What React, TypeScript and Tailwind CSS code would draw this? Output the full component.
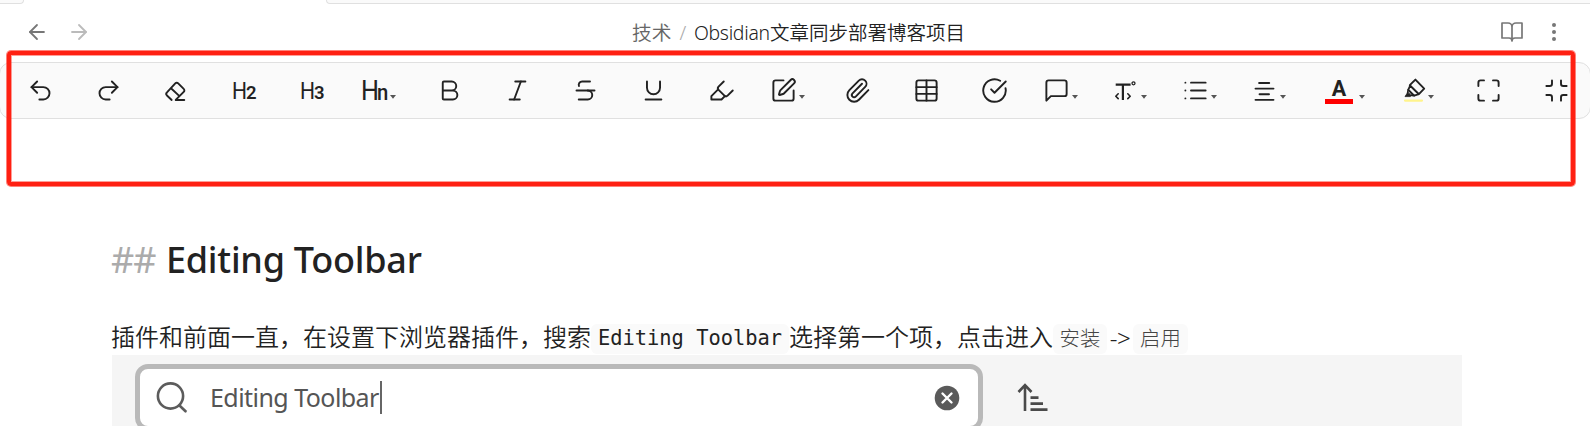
import React from "react";
import {
  ArrowLeft, ArrowRight, Undo2, Redo2, Bold, Italic, Strikethrough, Highlighter,
  SquarePen, Paperclip, Table, CircleCheckBig, List, Maximize, Minimize,
} from "lucide-react";

const S = 1.7;

function Svg({ children, size = 27, box = "0 0 24 24", stroke = S }: { children: React.ReactNode; size?: number; box?: string; stroke?: number }) {
  return (
    <svg width={size} height={size} viewBox={box} fill="none" stroke="currentColor" strokeWidth={stroke} strokeLinecap="round" strokeLinejoin="round" className="shrink-0">
      {children}
    </svg>
  );
}

function Caret() {
  return (
    <svg width="6" height="4" viewBox="0 0 6 4" className="mt-[18px] shrink-0">
      <path d="M0 0H6L3 3.8Z" fill="#555" />
    </svg>
  );
}

function Tool({ className, caret, children }: { className: string; caret?: boolean; children: React.ReactNode }) {
  return (
    <button className={`flex h-[27px] shrink-0 items-start justify-between ${className}`}>
      {children}
      {caret && <Caret />}
    </button>
  );
}

function Heading({ level }: { level: string }) {
  return (
    <span className="flex items-baseline pl-[1px] font-['Roboto'] leading-[27px]">
      <span className="w-[14px] origin-left scale-x-[0.86] text-[24.5px]">H</span>
      <span className="text-[18.5px] font-semibold">{level}</span>
    </span>
  );
}

function Toolbar() {
  return (
    <div className="-mx-px mt-[6px] flex h-[57px] shrink-0 items-start overflow-hidden rounded-xl border border-[#e0e0e0] bg-[#fafafa] pt-[14px] text-[#222]">
      <Tool className="ml-[27px] w-[27px]"><Undo2 size={27} strokeWidth={S} /></Tool>
      <Tool className="ml-[41px] w-[27px]"><Redo2 size={27} strokeWidth={S} /></Tool>
      <Tool className="ml-[40px] w-[27px]">
        <Svg><path d="M8.6 20.4 4.4 16.4a2 2 0 0 1 0-2.8L11.8 5.6a1.8 1.8 0 0 1 2.6 0L19.3 10.6a1.8 1.8 0 0 1 0 2.6L12.2 20.4H19.8M8 10l7.5 7" /></Svg>
      </Tool>
      <Tool className="ml-[42px] w-[28px]"><Heading level="2" /></Tool>
      <Tool className="ml-[40px] w-[28px]"><Heading level="3" /></Tool>
      <Tool className="ml-[34px] w-[35px]" caret>
        <span className="flex items-baseline font-['Roboto'] leading-[27px]">
          <span className="w-[16px] origin-left scale-x-[0.9] text-[28px]">H</span>
          <span className="w-[11px] origin-left scale-x-[0.92] text-[22px] font-medium">n</span>
        </span>
      </Tool>
      <Tool className="ml-[40px] w-[27px]"><Bold size={27} strokeWidth={S} /></Tool>
      <Tool className="ml-[41px] w-[27px]"><Italic size={27} strokeWidth={S} /></Tool>
      <Tool className="ml-[41px] w-[27px]"><Strikethrough size={27} strokeWidth={S} /></Tool>
      <Tool className="ml-[41px] w-[27px]"><Svg><path d="M6.2 4v5.6a5.8 5.8 0 0 0 11.6 0V4M5 20h14" /></Svg></Tool>
      <Tool className="ml-[41px] w-[27px]"><Highlighter size={27} strokeWidth={S} /></Tool>
      <Tool className="ml-[35px] w-[35px]" caret><SquarePen size={27} strokeWidth={S} /></Tool>
      <Tool className="ml-[39px] w-[27px]"><Paperclip size={27} strokeWidth={S} /></Tool>
      <Tool className="ml-[42px] w-[27px]"><Table size={27} strokeWidth={S} /></Tool>
      <Tool className="ml-[41px] w-[27px]"><CircleCheckBig size={27} strokeWidth={S} /></Tool>
      <Tool className="ml-[35px] w-[35px]" caret>
        <Svg><path d="M21 15a2 2 0 0 1-2 2H7l-4 4V5a2 2 0 0 1 2-2h14a2 2 0 0 1 2 2z" /></Svg>
      </Tool>
      <Tool className="ml-[34px] w-[35px]" caret>
        <Svg box="0 0 27 27" stroke={1.6}>
          <path d="M4.8 7.6H17.5M10.9 7.6V22" strokeWidth="2.2" strokeLinecap="square" />
          <path d="M6.2 16.8 3.8 19.2l2.4 2.4M15.8 16.8l2.4 2.4-2.4 2.4" />
          <circle cx="21.5" cy="6.3" r="1.5" strokeWidth="1.3" />
        </Svg>
      </Tool>
      <Tool className="ml-[35px] w-[35px]" caret><List size={27} strokeWidth={S} /></Tool>
      <Tool className="ml-[34px] w-[35px]" caret>
        <Svg><path d="M7.2 5.3h9M4 10.3h16M7.6 15.3h8.4M4 20.3h16" /></Svg>
      </Tool>
      <Tool className="ml-[39px] w-[40px]" caret>
        <span className="flex w-[28px] flex-col items-center pt-[2px]">
          <span className="font-['Roboto'] text-[21.5px] leading-[20px] font-bold">A</span>
          <span className="h-[5px] w-[28px] bg-[#fe0000]" />
        </span>
      </Tool>
      <Tool className="ml-[36px] w-[33px]" caret>
        <Svg box="0 0 27 27" stroke={1.9}>
          <path d="M8.8 8.2 14.4 2.6 23.2 11.6 17.9 17.2ZM9.2 8.6 7.2 12.8 13.2 18.6 17.8 17.2" />
          <path d="M7.2 12.8 6.6 15.6M13.2 18.6 10.4 18.4" strokeWidth="1.6" />
          <path d="M6.6 15.6 4 19.6H9.4L10.6 18.2Z" fill="currentColor" strokeWidth="0.8" />
          <path d="M4 23.6H21" stroke="#fff48c" strokeWidth="2.2" />
        </Svg>
      </Tool>
      <Tool className="ml-[41px] w-[27px]"><Maximize size={27} strokeWidth={S} /></Tool>
      <Tool className="ml-[41px] w-[27px]"><Minimize size={27} strokeWidth={S} /></Tool>
    </div>
  );
}

export default function App() {
  return (
    <div className="relative flex h-[426px] w-[1590px] flex-col overflow-hidden bg-white font-['Noto_Sans','Noto_Sans_CJK_SC',sans-serif] text-[#222]">
      <div className="flex h-[4px] shrink-0 justify-between">
        <div className="w-[24px] rounded-br-[4px] border-r border-b border-[#e0e0e0] bg-[#fafafa]" />
        <div className="w-[1264px] rounded-bl-[4px] border-b border-l border-[#e0e0e0] bg-[#fafafa]" />
      </div>

      <header className="flex h-[52px] shrink-0 items-center pt-[4px] pr-[24px] pl-[25px] text-[#777]">
        <ArrowLeft size={24} strokeWidth={1.8} />
        <ArrowRight size={24} strokeWidth={1.8} className="ml-[18px] text-[#bbb]" />
        <div className="ml-[541px] flex h-[28px] w-[869px] items-center pt-[2px] text-[19.4px] leading-[28px] font-[350] whitespace-nowrap">
          <span className="w-[40px] text-[19.8px] text-[#666]">技术</span>
          <span className="w-[22px] text-center text-[#aaa]">/</span>
          <span className="w-[76px] tracking-[-0.3px] text-[#222]">Obsidian</span>
          <span className="text-[19.5px] text-[#222]">文章同步部署博客项目</span>
        </div>
        <Svg size={24}><path d="M2 3h6a4 4 0 0 1 4 4v14a3 3 0 0 0-3-3H2zM22 3h-6a4 4 0 0 0-4 4v14a3 3 0 0 1 3-3h7z" /></Svg>
        <span className="ml-[18px]">
          <Svg size={24}>
            <g fill="currentColor" stroke="none">
              <circle cx="12" cy="5" r="2" /><circle cx="12" cy="12" r="2" /><circle cx="12" cy="19" r="2" />
            </g>
          </Svg>
        </span>
      </header>

      <Toolbar />

      <main className="mt-[113px] ml-[112px] flex w-[1350px] shrink-0 flex-col">
        <h2 className="flex h-[56px] items-center text-[36px] leading-[56px] font-medium whitespace-nowrap">
          <span className="-ml-px w-[55px] font-normal tracking-[-1px] text-[#ababab]">##</span>
          <span className="tracking-[-0.25px]">Editing Toolbar</span>
        </h2>
        <p className="-ml-px mt-[34px] flex h-[33px] items-center text-[24px] leading-[29px] font-[350] whitespace-nowrap">
          <span className="-mt-[6px] w-[480px] font-['Noto_Sans_CJK_SC']">插件和前面一直，在设置下浏览器插件，搜索</span>
          <code className="h-[30px] w-[198px] rounded-[6px] bg-[#fafafa] text-center font-['DejaVu_Sans_Mono'] text-[20.4px] leading-[29px] font-normal">Editing Toolbar</code>
          <span className="-mt-[6px] w-[264px] font-['Noto_Sans_CJK_SC']">选择第一个项，点击进入</span>
          <code className="h-[30px] w-[54px] rounded-[6px] bg-[#fafafa] text-center font-['Noto_Sans_CJK_SC'] text-[20.4px] leading-[26px] font-light text-[#444]">安装</code>
          <span className="-mt-[2px] w-[26px] text-center font-['Noto_Sans'] text-[24px] tracking-[-0.5px]">-&gt;</span>
          <code className="h-[30px] w-[55px] rounded-[6px] bg-[#fafafa] text-center font-['Noto_Sans_CJK_SC'] text-[20.4px] leading-[26px] font-light text-[#444]">启用</code>
        </p>
        <div className="flex h-[90px] items-start bg-[#f5f5f5] pt-[9px] pl-[23px]">
          <div className="flex h-[67px] w-[848px] items-center rounded-[13px] border-[5px] border-[#b9b9b9] bg-white pl-[16px] text-[#555]">
            <svg width="32" height="32" viewBox="0 0 32 32" fill="none" stroke="#5c5c5c" strokeWidth="2.6" strokeLinecap="round">
              <circle cx="14.5" cy="14" r="12.6" />
              <path d="M23.5 23.5 29.5 29.3" />
            </svg>
            <span className="ml-[22px] w-[170px] text-[25px] font-normal tracking-[-0.55px] whitespace-nowrap">Editing Toolbar</span>
            <span className="h-[33px] w-[2px] bg-[#666]" />
            <svg width="26" height="26" viewBox="0 0 26 26" className="mr-[18px] ml-auto">
              <circle cx="13" cy="13" r="12.3" fill="#5a5a5a" />
              <path d="M8.5 8.5 17.5 17.5M17.5 8.5 8.5 17.5" stroke="#fff" strokeWidth="2.4" strokeLinecap="round" />
            </svg>
          </div>
          <svg width="32" height="30" viewBox="0 0 32 30" className="mt-[18px] ml-[33px]" fill="none" stroke="#4a4a4a" strokeWidth="2.6">
            <path d="M9 29V3.5M2.5 10 9 3.2 15.5 10" />
            <path d="M14.5 15.6h8M14.5 21.6h12.5M14.5 27.6h17" />
          </svg>
        </div>
      </main>

      <div className="pointer-events-none absolute top-[51px] left-[7px] h-[135px] w-[1568px] rounded-[4px] border-4 border-[#ff2012] shadow-[0_0_0_1px_#ff201290,inset_0_0_0_1px_#ff201270]" />
    </div>
  );
}
